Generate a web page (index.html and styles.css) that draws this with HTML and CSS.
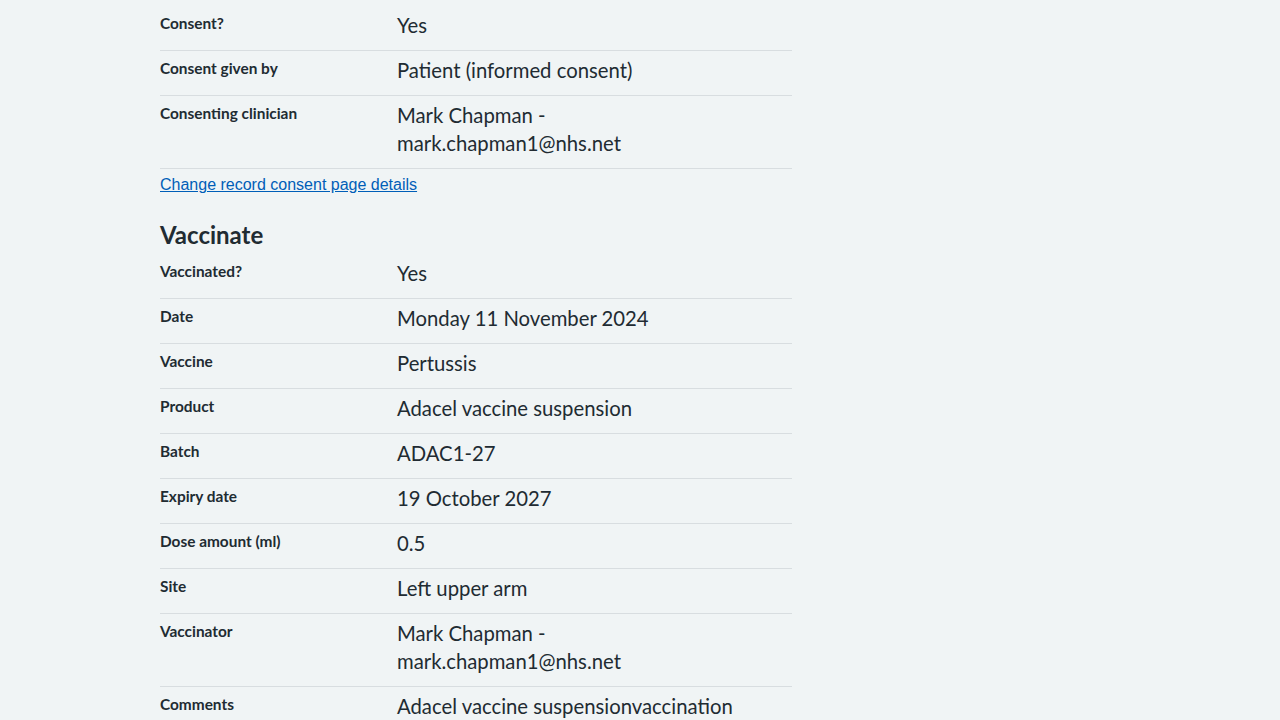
FILE: index.html
```html
<!DOCTYPE html>
<html lang="en">
<head>
<meta charset="utf-8">
<title>Check and confirm</title>
<link rel="stylesheet" href="styles.css">
</head>
<body>
<main class="page">
  <dl class="summary">
    <div class="row"><dt class="key">Consent?</dt><dd class="value">Yes</dd></div>
    <div class="row"><dt class="key">Consent given by</dt><dd class="value">Patient (informed consent)</dd></div>
    <div class="row"><dt class="key">Consenting clinician</dt><dd class="value">Mark Chapman - mark.chapman1@nhs.net</dd></div>
  </dl>
  <a class="change-link" href="#">Change record consent page details</a>

  <h2 class="heading">Vaccinate</h2>
  <dl class="summary">
    <div class="row"><dt class="key">Vaccinated?</dt><dd class="value">Yes</dd></div>
    <div class="row"><dt class="key">Date</dt><dd class="value">Monday 11 November 2024</dd></div>
    <div class="row"><dt class="key">Vaccine</dt><dd class="value">Pertussis</dd></div>
    <div class="row"><dt class="key">Product</dt><dd class="value">Adacel vaccine suspension</dd></div>
    <div class="row"><dt class="key">Batch</dt><dd class="value">ADAC1-27</dd></div>
    <div class="row"><dt class="key">Expiry date</dt><dd class="value">19 October 2027</dd></div>
    <div class="row"><dt class="key">Dose amount (ml)</dt><dd class="value">0.5</dd></div>
    <div class="row"><dt class="key">Site</dt><dd class="value">Left upper arm</dd></div>
    <div class="row"><dt class="key">Vaccinator</dt><dd class="value">Mark Chapman - mark.chapman1@nhs.net</dd></div>
    <div class="row"><dt class="key">Comments</dt><dd class="value">Adacel vaccine suspensionvaccination</dd></div>
  </dl>
</main>
</body>
</html>
```

FILE: styles.css
```css
html, body {
  margin: 0;
  padding: 0;
  background: #f0f4f5;
  color: #212b32;
  font-family: Lato, "Noto Sans", sans-serif;
}

.page {
  width: 632px;
  margin-left: 160px;
  padding-top: 6px;
}

.summary {
  margin: 0;
}

.row {
  display: grid;
  grid-template-columns: 237px 1fr;
  border-bottom: 1px solid #d8dde0;
}

.key {
  margin: 0;
  padding: 5px 0 12px 0;
  font-weight: 700;
  font-size: 15.4px;
  line-height: 24px;
}

.value {
  margin: 0;
  padding: 5px 0 11px 0;
  font-size: 20.3px;
  line-height: 28px;
  width: 340px;
}

.change-link {
  display: block;
  margin-top: 7px;
  font-family: "Liberation Sans", Arial, sans-serif;
  font-size: 16px;
  line-height: 18px;
  color: #005eb8;
  text-decoration: underline;
  width: max-content;
}

.heading {
  margin: 27px 0 0 0;
  padding-bottom: 5px;
  font-size: 24px;
  line-height: 28px;
  font-weight: 700;
}
```
